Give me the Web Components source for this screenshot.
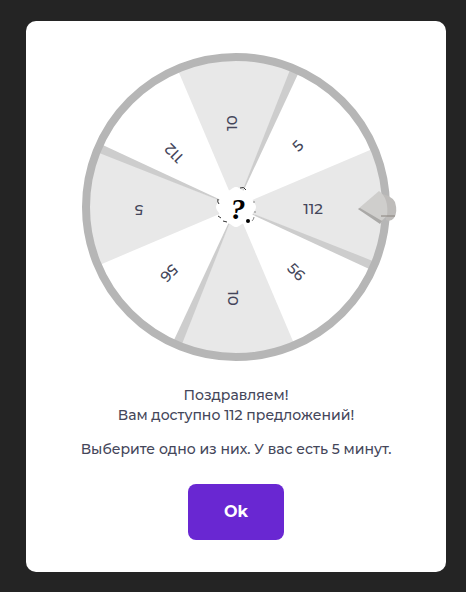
<!DOCTYPE html>
<html lang="ru">
<head>
<meta charset="utf-8">
<meta name="viewport" content="width=device-width, initial-scale=1">
<title>Поздравляем!</title>
<style>
html { background: #242424; }
body {
  margin: 0; min-height: 100vh; box-sizing: border-box;
  padding: 21px 20px 20px 26px; background: #242424;
  color: #44465a;
  font-family: Montserrat, Inter, "Open Sans", sans-serif;
  font-weight: 500;
}
</style>
</head>
<body>
<prize-dialog>
  <prize-wheel slot="wheel"></prize-wheel>
  <prize-message>
    <p>Поздравляем!<br>Вам доступно 112 предложений!</p>
    <p>Выберите одно из них. У вас есть 5 минут.</p>
  </prize-message>
  <prize-button slot="action">Ok</prize-button>
</prize-dialog>

<script>
class PrizeDialog extends HTMLElement {
  constructor() {
    super();
    this.attachShadow({ mode: "open" }).innerHTML = `
      <style>
        :host { display: block; max-width: 480px; margin: 0 auto; }
        section {
          display: flex; flex-direction: column; align-items: center;
          padding: 32px 16px; border-radius: 10px; background: #fff;
        }
        .message { margin: 24px 0 25px; }
      </style>
      <section role="dialog" aria-label="Поздравляем!">
        <slot name="wheel"></slot>
        <div class="message"><slot></slot></div>
        <slot name="action"></slot>
      </section>`;
  }
}

class PrizeWheel extends HTMLElement {
  constructor() {
    super();
    const point = (r, deg) => {
      const a = deg * Math.PI / 180;
      return (r * Math.cos(a)).toFixed(2) + " " + (r * Math.sin(a)).toFixed(2);
    };
    const wedge = (from, to) =>
      `M0 0L${point(147, from)}A147 147 0 0 1 ${point(147, to)}Z`;
    const sectors = [0, 90, 180, 270].map(a =>
      `<path fill="#e8e8e8" d="${wedge(a - 23, a + 22)}"/>
       <path fill="#cdcdcd" d="${wedge(a + 21.5, a + 25)}"/>`).join("");
    const labels = [
      ["112", 77, 2, 0], ["56", 60, 65, 45], ["10", -3, 91, 90],
      ["56", -67, 66, 135], ["5", -97, 3, 180], ["112", -62, -54, 225],
      ["10", -4, -84, 270], ["5", 62, -61, 315]
    ].map(([t, x, y, a]) =>
      `<text transform="translate(${x} ${y}) rotate(${a})" y="5">${t}</text>`).join("");
    const rim = Array.from({ length: 120 }, (_, i) =>
      point(19 + Math.cos(i * 24 * Math.PI / 180), i * 3)).join("L");
    this.attachShadow({ mode: "open" }).innerHTML = `
      <style>
        :host { display: block; width: 100%; max-width: 308px; }
        svg { display: block; width: 100%; overflow: visible; }
        text { font-size: 15px; text-anchor: middle; fill: #44465a; }
        .mark { font: italic bold 30px "Liberation Serif", serif; fill: #000; }
      </style>
      <svg viewBox="-154 -154 308 308" role="img" aria-label="Колесо предложений">
        <circle r="149" fill="#fff"/>
        ${sectors}
        <circle r="150" fill="none" stroke="#b6b6b6" stroke-width="8"/>
        ${labels}
        <path fill="#fff" d="M${rim}Z"/>
        <g fill="none" stroke="#333" stroke-width="1">
          <path d="M4-19q4-2 6 2M-18-8q-1 3 1 5M-18 9l3 2M-13 14l4 1"/>
          <path d="M18-6v2M19 4v2M16 14q2-2 2-4" stroke="#888"/>
        </g>
        <circle cx="12" cy="14" r="2"/>
        <text class="mark" x="2" y="12">?</text>
        <path d="M143-13Q154-13 159-5Q162 5 158 11Q155 15 150 13V9L145 16Z" fill="#bebcba"/>
        <path d="M122 2L143-16Q153-9 151 9L144 15Z" fill="#cfcecc"/>
        <path d="M122 2L124 1L146 14L144 17Z" fill="#aaa9a7"/>
        <path d="M145 9h14" stroke="#88827c" stroke-width="1"/>
      </svg>`;
  }
}

class PrizeMessage extends HTMLElement {
  constructor() {
    super();
    this.attachShadow({ mode: "open" }).innerHTML = `
      <style>
        :host {
          display: grid; gap: 14px; text-align: center;
          font-size: 14px; line-height: 20px;
        }
        ::slotted(p) { margin: 0; }
      </style>
      <slot></slot>`;
  }
}

class PrizeButton extends HTMLElement {
  constructor() {
    super();
    this.attachShadow({ mode: "open" }).innerHTML = `
      <style>
        :host { display: block; }
        button {
          display: block; min-width: 96px; padding: 16px 32px;
          border: 0; border-radius: 8px; background: #6927d2; color: #fff;
          font-family: inherit; font-size: 16px; font-weight: 700;
          line-height: 24px; cursor: pointer;
        }
      </style>
      <button type="button"><slot></slot></button>`;
  }
}

customElements.define("prize-dialog", PrizeDialog);
customElements.define("prize-wheel", PrizeWheel);
customElements.define("prize-message", PrizeMessage);
customElements.define("prize-button", PrizeButton);
</script>
</body>
</html>
